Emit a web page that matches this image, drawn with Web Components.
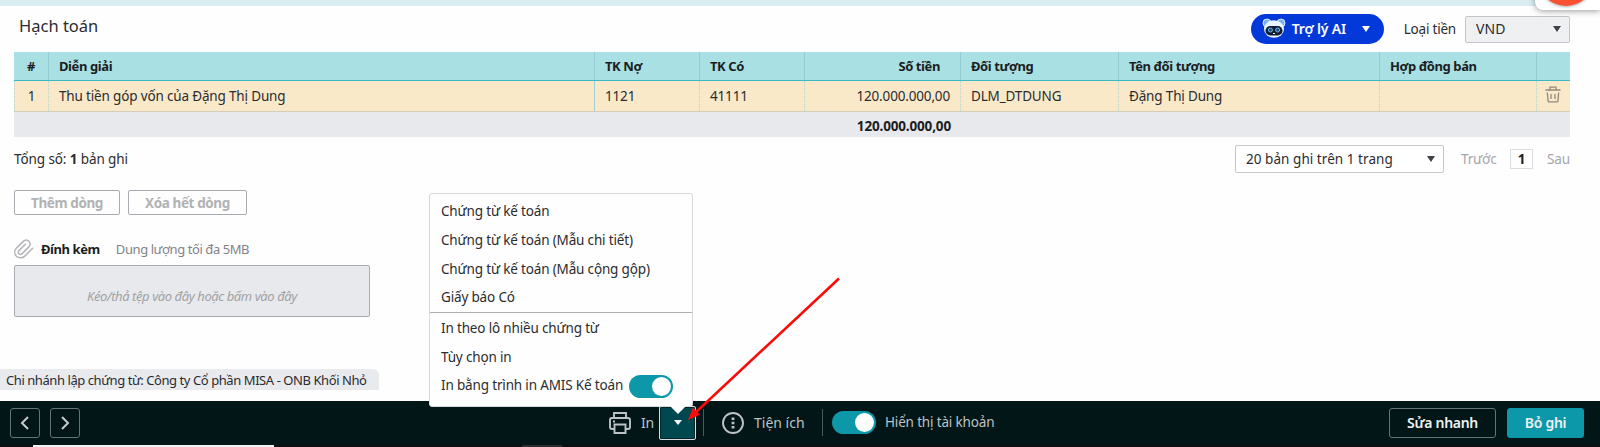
<!DOCTYPE html>
<html lang="vi">
<head>
<meta charset="utf-8">
<title>Hạch toán</title>
<style>
  body {
    margin: 0;
    width: 1600px;
    height: 447px;
    overflow: hidden;
    background: #fefefe;
    color: #2b2c30;
    font: 13.5px/20px "Noto Sans", sans-serif;
    letter-spacing: -.16px;
  }
</style>
</head>
<body>

<template id="voucher-page">
  <style>
    :host { display: grid; grid-template-rows: 6px 395px 46px; height: 447px; position: relative; }
    .band { background: #d9edf0; }
    main { padding: 0 30px 0 14px; display: flex; flex-direction: column; box-sizing: border-box; }
  </style>
  <div class="band"></div>
  <main><slot></slot></main>
  <slot name="footer"></slot>
  <slot name="overlay"></slot>
</template>

<template id="drop-select">
  <style>
    :host {
      display: flex; align-items: center; justify-content: space-between;
      box-sizing: border-box; height: 28px; padding: 0 8px 0 10px;
      border: 1px solid #c4c6cc; border-radius: 2px; background: #fff;
      letter-spacing: .05px;
    }
    :host([disabled]) { background: #eff0f2; height: 27px; font-size: 14px; }
    i { border: 4.5px solid transparent; border-top: 6px solid #3f4248; border-bottom: 0; }
  </style>
  <slot></slot><i></i>
</template>

<template id="ai-button">
  <style>
    :host {
      display: flex; align-items: center; box-sizing: border-box;
      width: 133px; height: 30px; padding: 0 14px 0 11px; border-radius: 15px;
      background: #0339d9; color: #fff; font-weight: 600; font-size: 14px;
    }
    span { flex: 1; margin-left: 6px; }
    i { border: 4.5px solid transparent; border-top: 6px solid #fff; border-bottom: 0; }
  </style>
  <svg width="24" height="22" viewBox="0 0 24 22">
    <circle cx="5" cy="5" r="4" fill="#76b2f5"/>
    <circle cx="19" cy="5" r="4" fill="#76b2f5"/>
    <circle cx="5" cy="5" r="4" fill="none" stroke="#d9ebfd"/>
    <circle cx="19" cy="5" r="4" fill="none" stroke="#d9ebfd"/>
    <ellipse cx="12" cy="11" rx="10" ry="8.8" fill="#eaf4ff"/>
    <rect x="3.500" y="8" width="17" height="9.500" rx="4.700" fill="#111c33"/>
    <circle cx="8.400" cy="12" r="2" fill="#234769" stroke="#69bdf3"/>
    <circle cx="15.600" cy="12" r="2" fill="#234769" stroke="#69bdf3"/>
    <path d="M11 15.500h2" stroke="#fff"/>
  </svg>
  <span><slot></slot></span><i></i>
</template>

<template id="entry-grid">
  <style>
    :host { display: block; }
    .row { display: grid; grid-template-columns: 34px 546px 105px 105px 156px 158px 261px 157px 34px; }
    .row > * { box-sizing: border-box; padding: 0 10px; display: flex; align-items: center; white-space: nowrap; }
    .row > .num { justify-content: flex-end; padding-right: 10px; }
    .row > .idx { justify-content: center; padding: 0; }
    .head {
      box-sizing: border-box; height: 29px; background: #a9e0e4; border-bottom: 1px solid #3bb8c6;
      font-weight: 700; font-size: 13px; letter-spacing: -.4px; color: #1c1d21;
    }
    .head > * + * { border-left: 1px solid #93cdd2; }
    .head > .num { padding-right: 20px; }
    .line { height: 31px; background: #f9e9c9; border-bottom: 1px solid #d5cdbb; box-sizing: border-box; }
    .line > * { border-left: 1px dotted #aed6cc; }
    .line > .fixed { border-left: 1px solid #a3ced2; }
    .total { height: 25px; background: #e8e9ed; font-weight: 700; color: #1c1d21; }
    .total > .num { padding: 2px 9px 0 0; }
    svg { margin: -4px 0 0 -2px; }
  </style>
  <div class="row head">
    <div class="idx">#</div><div>Diễn giải</div><div>TK Nợ</div><div>TK Có</div><div class="num">Số tiền</div><div>Đối tượng</div><div>Tên đối tượng</div><div>Hợp đồng bán</div><div></div>
  </div>
  <div class="row line">
    <div class="idx">1</div><div>Thu tiền góp vốn của Đặng Thị Dung</div><div class="fixed">1121</div><div>41111</div><div class="num">120.000.000,00</div><div>DLM_DTDUNG</div><div>Đặng Thị Dung</div><div></div>
    <div class="idx">
      <svg width="16" height="17" viewBox="0 0 16 17" fill="none" stroke="#92897b" stroke-width="1.300">
        <path d="M.5 4h15M5 4V1.200h6V4M2.300 6.500l.8 8.400q.1 1 1 1h7.800q.9 0 1-1l.8-8.400M6 8v5M10 8v5"/>
      </svg>
    </div>
  </div>
  <div class="row total"><div></div><div></div><div></div><div></div><div class="num">120.000.000,00</div></div>
</template>

<template id="page-nav">
  <style>
    :host { display: flex; align-items: center; }
    .count { flex: 1; letter-spacing: -.1px; }
    drop-select { width: 209px; }
    .off { color: #a5a6aa; }
    .prev { width: 49px; margin-left: 17px; }
    .cur { width: 21px; height: 18px; line-height: 18px; border: 1px solid #dcdde1; text-align: center; font-weight: 700; color: #1c1d21; }
    .next { margin-left: 14px; width: 23px; }
  </style>
  <div class="count"><slot></slot></div>
  <drop-select>20 bản ghi trên 1 trang</drop-select>
  <div class="off prev">Trước</div><div class="cur">1</div><div class="off next">Sau</div>
</template>

<template id="line-button">
  <style>
    :host {
      display: flex; align-items: center; justify-content: center; box-sizing: border-box;
      height: 25px; border: 1px solid #a9abb2; border-radius: 2px;
      color: #b1b2b4; font-weight: 700; letter-spacing: -.4px; white-space: nowrap;
    }
    :host([kind]) { height: 30px; border-color: #667276; border-radius: 3px; color: #eef1f2; font-size: 14px; font-weight: 600; letter-spacing: -.3px; }
    :host([kind=main]) { border-color: #0c98a8; background: #0c98a8; }
  </style>
  <slot></slot>
</template>

<template id="file-drop">
  <style>
    :host { display: block; width: 356px; font-size: 13px; letter-spacing: -.42px; }
    .label { display: flex; align-items: center; height: 20px; }
    b { color: #1c1d21; margin-left: 7px; }
    .hint { color: #828387; margin-left: 16px; }
    .zone {
      height: 52px; box-sizing: border-box; margin-top: 6px; padding-top: 9px;
      display: flex; align-items: center; justify-content: center;
      border: 1px solid #a9abb2; border-radius: 2px; background: #e8e9ec;
      color: #a1a2a6; font-style: italic;
    }
  </style>
  <div class="label">
    <svg width="20" height="20" viewBox="0 0 20 20" fill="none" stroke="#b3b4b8" stroke-width="1.500" stroke-linecap="round" stroke-linejoin="round">
      <path d="M18.600 9.300l-7.800 7.800c-2.100 2.100-5.900 2.400-8.300.2-2.300-2.400-2.300-5.800-.2-8l6.900-6.900c1.700-1.600 4.200-1.700 5.800-.2 1.600 1.600 1.500 4.100-.1 5.700l-6.800 6.700c-.9.9-2.300.9-3.100.1-.9-.9-.8-2.200 0-3.100l6.400-6.300"/>
    </svg>
    <b>Đính kèm</b><span class="hint">Dung lượng tối đa 5MB</span>
  </div>
  <div class="zone"><slot></slot></div>
</template>

<template id="toggle-switch">
  <style>
    :host { display: flex; justify-content: flex-end; align-items: center; flex: none; box-sizing: border-box; width: 44px; height: 23px; padding: 0 2px; border-radius: 12px; background: #0c98a8; }
    i { width: 19px; height: 19px; border-radius: 50%; background: #fff; }
  </style>
  <i></i>
</template>

<template id="print-menu">
  <style>
    :host {
      position: absolute; left: 429px; top: 193px; box-sizing: border-box; width: 264px; height: 214px;
      padding: 3px 0 0; border: 1px solid #d6d8dc; border-radius: 3px; background: #fefefe;
      display: block;
    }
    ::slotted(div) { display: flex; align-items: center; height: 28.700px; padding: 0 11px; white-space: nowrap; }
    ::slotted(hr) { margin: 0 0 1px; border: 0; border-top: 1px solid #adaeb2; }
    .tip { position: absolute; left: 239px; top: 211px; border: 9px solid transparent; border-top-color: #fefefe; border-bottom: 0; }
  </style>
  <slot></slot>
  <div class="tip"></div>
</template>

<template id="action-bar">
  <style>
    :host { display: flex; flex-direction: column; color: #bcc2c5; }
    .bar { display: flex; align-items: center; box-sizing: border-box; height: 44px; padding: 0 16px 1px 10px; background: #021618; }
    .sq { box-sizing: border-box; width: 30px; height: 30px; margin-right: 10px; border: 1px solid #667276; border-radius: 3px; display: grid; place-items: center; }
    .mid { flex: 1; display: flex; align-items: center; }
    .print { margin-left: 519px; }
    .in { margin-left: 10px; width: 18px; font-size: 14px; }
    .split { box-sizing: border-box; width: 37px; height: 34px; border: 1px solid #d7dddd; border-radius: 2px; background: #004850; display: grid; place-items: center; box-shadow: inset 0 0 0 1px #02262b; }
    .split i { border: 4px solid transparent; border-top: 5px solid #fff; border-bottom: 0; }
    .sep { width: 1px; height: 27px; background: #4d585b; }
    .more { margin-left: 18px; }
    .tools { margin-left: 10px; width: 68px; font-size: 14px; letter-spacing: 0; }
    toggle-switch { margin-left: 9px; }
    .show { margin: -2px 0 0 9px; }
    .low { display: flex; height: 2px; background: #120d12; }
    .low i { height: 2px; }
  </style>
  <div class="bar">
    <div class="sq"><svg width="10" height="14" viewBox="0 0 10 14" fill="none" stroke="#c5cacc" stroke-width="2"><path d="M8 1L2 7l6 6"/></svg></div>
    <div class="sq"><svg width="10" height="14" viewBox="0 0 10 14" fill="none" stroke="#c5cacc" stroke-width="2"><path d="M2 1l6 6-6 6"/></svg></div>
    <div class="mid">
      <svg class="print" width="22" height="22" viewBox="0 0 22 22" fill="none" stroke="#bcc2c5" stroke-width="1.900">
        <path d="M5 5V1h12v4M5 17H3Q1 17 1 15V8q0-2 2-2h16q2 0 2 2v7q0 2-2 2h-2M5.500 12.500h11V21h-11zM4 9.500h2"/>
      </svg>
      <span class="in">In</span>
      <div class="split"><i></i></div>
      <div class="sep" style="margin-left:7px"></div>
      <svg class="more" width="22" height="22" viewBox="0 0 22 22" fill="none" stroke="#bcc2c5" stroke-width="1.900">
        <circle cx="11" cy="11" r="10"/>
        <path d="M11 5.500v2.600M11 9.700v2.600M11 13.900v2.600" stroke-width="2.800"/>
      </svg>
      <span class="tools">Tiện ích</span>
      <div class="sep"></div>
      <toggle-switch></toggle-switch>
      <span class="show">Hiển thị tài khoản</span>
    </div>
    <line-button kind="bar" style="width:107px">Sửa nhanh</line-button>
    <line-button kind="main" style="width:77px;margin-left:11px">Bỏ ghi</line-button>
  </div>
  <div class="low"><i style="width:241px;margin-left:33px;background:#f2f2f2"></i><i style="width:40px;margin-left:248px;background:#2e2b2e"></i></div>
</template>

<template id="corner-bubble">
  <style>
    :host { position: absolute; display: block; right: 0; top: -30px; width: 65px; height: 40px; border-radius: 0 0 0 8px; background: #fff; box-shadow: 0 1px 6px #0006; }
    i { position: absolute; left: 3px; top: -20.500px; width: 56px; height: 56px; border-radius: 50%; background: #fa5133; box-shadow: 0 1px 3px #0005; }
  </style>
  <i></i>
</template>

<template id="pointer-arrow">
  <style>
    :host { position: absolute; display: block; left: 680px; top: 270px; width: 170px; height: 155px; }
  </style>
  <svg width="170" height="155" viewBox="0 0 170 155">
    <path d="M159 8.500L14 144" stroke="#fb0a0a" stroke-width="2.600"/>
    <path d="M8 150l5-12.500 7 7.300z" fill="#fb0a0a"/>
  </svg>
</template>

<script>
  // each template id is the tag name it becomes
  document.querySelectorAll("template").forEach(template => {
    customElements.define(template.id, class extends HTMLElement {
      constructor() {
        super();
        this.attachShadow({mode: "open"});
        this.shadowRoot.appendChild(template.content.cloneNode(true));
      }
    });
  });
</script>

<style>
  .top { display: flex; align-items: center; height: 46px; }
  .top h1 { flex: 1; margin: -7px 0 0 5px; font-size: 16.500px; font-weight: 400; letter-spacing: 0; }
  .top span { margin: 0 9px 0 20px; letter-spacing: -.2px; }
  page-nav { margin-top: 8px; }
  .buttons { display: flex; gap: 8px; margin-top: 17px; }
  file-drop { margin-top: 24px; }
  .branch {
    box-sizing: border-box; width: 379px; height: 21px; margin: 52px 0 0 -14px; padding-left: 6px;
    border-radius: 0 6px 0 0; background: #e9eaed; font-size: 13px; line-height: 22px; letter-spacing: -.43px; white-space: nowrap;
  }
</style>

<voucher-page>
  <div class="top">
    <h1>Hạch toán</h1>
    <ai-button>Trợ lý AI</ai-button>
    <span>Loại tiền</span>
    <drop-select disabled style="width:105px">VND</drop-select>
  </div>
  <entry-grid></entry-grid>
  <page-nav>Tổng số: <b>1</b> bản ghi</page-nav>
  <div class="buttons">
    <line-button style="width:106px">Thêm dòng</line-button>
    <line-button style="width:119px">Xóa hết dòng</line-button>
  </div>
  <file-drop>Kéo/thả tệp vào đây hoặc bấm vào đây</file-drop>
  <div class="branch">Chi nhánh lập chứng từ: Công ty Cổ phần MISA - ONB Khối Nhỏ</div>

  <action-bar slot="footer"></action-bar>

  <print-menu slot="overlay">
    <div>Chứng từ kế toán</div>
    <div>Chứng từ kế toán (Mẫu chi tiết)</div>
    <div>Chứng từ kế toán (Mẫu cộng gộp)</div>
    <div>Giấy báo Có</div>
    <hr>
    <div>In theo lô nhiều chứng từ</div>
    <div>Tùy chọn in</div>
    <div>In bằng trình in AMIS Kế toán <toggle-switch style="margin:3px 0 0 6px"></toggle-switch></div>
  </print-menu>
  <corner-bubble slot="overlay"></corner-bubble>
  <pointer-arrow slot="overlay"></pointer-arrow>
</voucher-page>

</body>
</html>
